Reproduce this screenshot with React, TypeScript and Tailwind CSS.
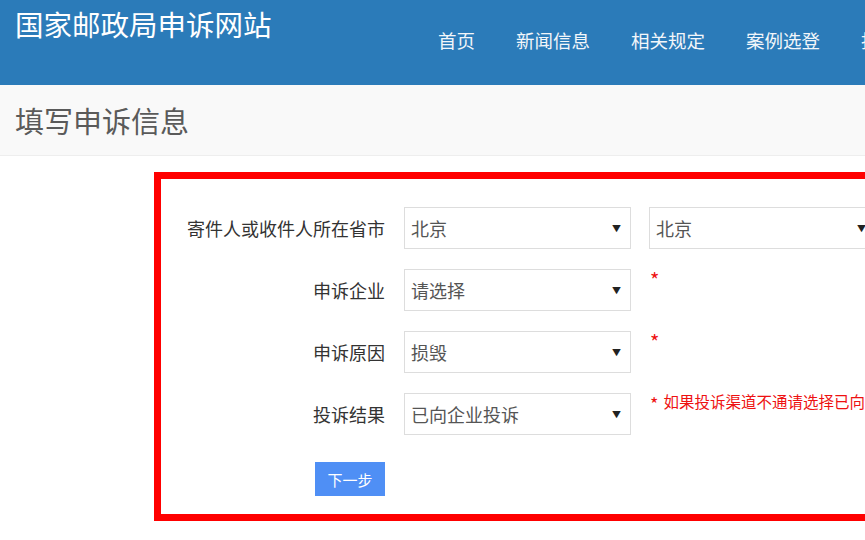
import React from 'react';

const navItems = ['首页', '新闻信息', '相关规定', '案例选登', '投诉须知'];

const font = { fontFamily: '"Noto Sans CJK SC", "Noto Sans", sans-serif' };

const FakeSelect = ({ value }: { value: string }) => (
  <div className="w-[227px] h-[42px] shrink-0 border border-[#dddddd] bg-white flex items-center justify-between pl-[6px] pr-[9px]">
    <span className="text-[18px] text-[#555555] leading-none">{value}</span>
    <span className="text-[9px] text-[#222222] leading-none">▼</span>
  </div>
);

const Row = ({
  label,
  children,
}: {
  label: string;
  children: React.ReactNode;
}) => (
  <div className="flex items-start">
    <div className="w-[224px] h-[42px] shrink-0 flex items-center justify-end text-[18px] text-[#333333] leading-none whitespace-nowrap">
      {label}
    </div>
    <div className="ml-[19px] flex items-start">{children}</div>
  </div>
);

const Star = () => <span className="text-[20px] leading-none text-[#ee1111]">*</span>;

const App = () => {
  return (
    <div className="w-[865px] h-[540px] overflow-hidden bg-white" style={font}>
      {/* Header */}
      <div className="h-[85px] bg-[#2b7bb9] flex items-start whitespace-nowrap">
        <div className="w-[438px] shrink-0 pl-[15px] pt-[10px] text-[28.5px] leading-none text-white">
          国家邮政局申诉网站
        </div>
        <div className="flex gap-[41px] pt-[31px] shrink-0">
          {navItems.map((item) => (
            <span key={item} className="text-[18.5px] leading-none text-[#f2f6fa]">
              {item}
            </span>
          ))}
        </div>
      </div>

      {/* Page title */}
      <div className="h-[71px] bg-[#f9f9f9] border-b border-[#eeeeee] flex items-center pl-[15px]">
        <h1 className="text-[29px] leading-none text-[#5a5a5a]">填写申诉信息</h1>
      </div>

      {/* Form */}
      <div className="ml-[154px] mt-[16px] w-[900px] border-[7px] border-[#ff0000] pt-[28px] pb-[18px]">
        <div className="flex flex-col gap-[20px]">
          <Row label="寄件人或收件人所在省市">
            <FakeSelect value="北京" />
            <div className="ml-[18px]">
              <FakeSelect value="北京" />
            </div>
          </Row>
          <Row label="申诉企业">
            <FakeSelect value="请选择" />
            <span className="ml-[19px] pt-[1px] leading-none"><Star /></span>
          </Row>
          <Row label="申诉原因">
            <FakeSelect value="损毁" />
            <span className="ml-[19px] pt-[1px] leading-none"><Star /></span>
          </Row>
          <Row label="投诉结果">
            <FakeSelect value="已向企业投诉" />
            <span className="ml-[19px] flex items-start gap-[5px] pt-[1px] text-[15.5px] leading-none text-[#ee1111] whitespace-nowrap">
              <span className="text-[18px] leading-none">*</span>
              <span>如果投诉渠道不通请选择已向企业投诉</span>
            </span>
          </Row>
        </div>
        <button className="mt-[27px] ml-[154px] w-[70px] h-[34px] bg-[#4f8ff5] text-white text-[15px] leading-none">
          下一步
        </button>
      </div>
    </div>
  );
};

export default App;
